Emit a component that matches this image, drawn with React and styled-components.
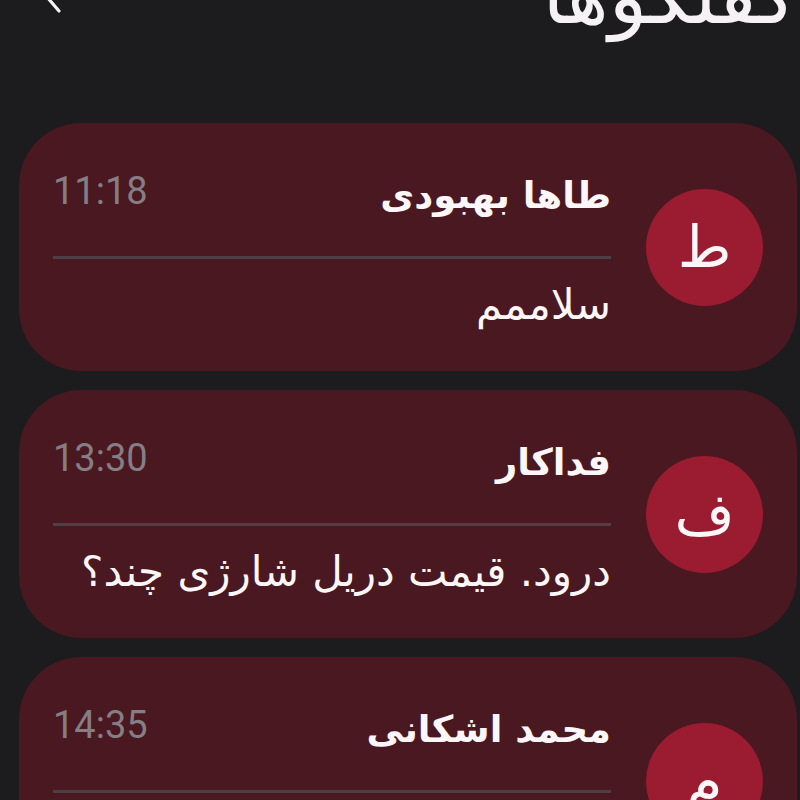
import React from "react";
import { styled, createGlobalStyle } from "styled-components";

const GlobalStyle = createGlobalStyle`
  body {
    margin: 0;
    background: #1c1b1e;
    overflow: hidden;
  }
`;

const faFont = `"DejaVu Sans", "Noto Sans Arabic", sans-serif`;

const Page = styled.div`
  width: 800px;
  height: 800px;
  box-sizing: border-box;
  padding: 0 3px 0 19px;
  background: #1c1b1e;
  overflow: hidden;
`;

const Header = styled.div`
  display: flex;
  justify-content: space-between;
  align-items: center;
  height: 90px;
  margin-top: -49px;
  padding: 0 0 0 16px;
`;

const BackButton = styled.div`
  display: flex;
  align-items: center;
  margin-top: -12px;
`;

const Title = styled.h1`
  margin: 0;
  color: #f4f2f4;
  font-family: ${faFont};
  font-size: 80px;
  font-weight: 400;
  line-height: 1;
  direction: rtl;
`;

const List = styled.div`
  display: flex;
  flex-direction: column;
  gap: 19px;
  margin-top: 82px;
`;

const Card = styled.div`
  display: flex;
  direction: rtl;
  align-items: flex-start;
  gap: 35px;
  height: 248px;
  flex-shrink: 0;
  box-sizing: border-box;
  padding: 0 34px;
  border-radius: 62px;
  background: #4a1820;
`;

const Avatar = styled.div`
  align-self: center;
  flex-shrink: 0;
  width: 117px;
  height: 117px;
  border-radius: 50%;
  background: #9b1b30;
  display: flex;
  align-items: center;
  justify-content: center;
  color: #fbf6f7;
  font-family: ${faFont};
  font-size: 58px;
  line-height: 1;
`;

const Content = styled.div`
  flex: 1;
  display: flex;
  flex-direction: column;
  padding-top: 47px;
`;

const HeadRow = styled.div`
  display: flex;
  justify-content: space-between;
  align-items: center;
  height: 50px;
`;

const Name = styled.span`
  color: #fbf7f8;
  font-family: ${faFont};
  font-size: 37px;
  font-weight: 700;
`;

const Time = styled.span`
  direction: ltr;
  color: #857e84;
  font-family: Roboto, "Liberation Sans", sans-serif;
  font-size: 38px;
  margin-top: -8px;
`;

const Divider = styled.div`
  height: 3px;
  margin-top: 36px;
  background: #4c3f46;
`;

const Message = styled.p`
  margin: 24px 0 0;
  height: 44px;
  color: #fbf7f8;
  font-family: ${faFont};
  font-size: 42px;
  line-height: 44px;
  white-space: nowrap;
`;

const chats = [
  { letter: "ط", name: "طاها بهبودی", time: "11:18", text: "سلاممم" },
  { letter: "ف", name: "فداکار", time: "13:30", text: "درود. قیمت دریل شارژی چند؟" },
  { letter: "م", name: "محمد اشکانی", time: "14:35", text: "سلام وقت بخیر" },
];

const App = () => {
  return (
    <Page>
      <GlobalStyle />
      <Header>
        <BackButton>
          <svg width="30" height="50" viewBox="0 0 30 50" fill="none">
            <path
              d="M24 4 L6 25 L24 46"
              stroke="#f4f2f4"
              strokeWidth="3.2"
              strokeLinecap="round"
              strokeLinejoin="round"
            />
          </svg>
        </BackButton>
        <Title>گفتگوها</Title>
      </Header>
      <List>
        {chats.map((c) => (
          <Card key={c.time}>
            <Avatar>{c.letter}</Avatar>
            <Content>
              <HeadRow>
                <Name>{c.name}</Name>
                <Time>{c.time}</Time>
              </HeadRow>
              <Divider />
              <Message>{c.text}</Message>
            </Content>
          </Card>
        ))}
      </List>
    </Page>
  );
};

export default App;
